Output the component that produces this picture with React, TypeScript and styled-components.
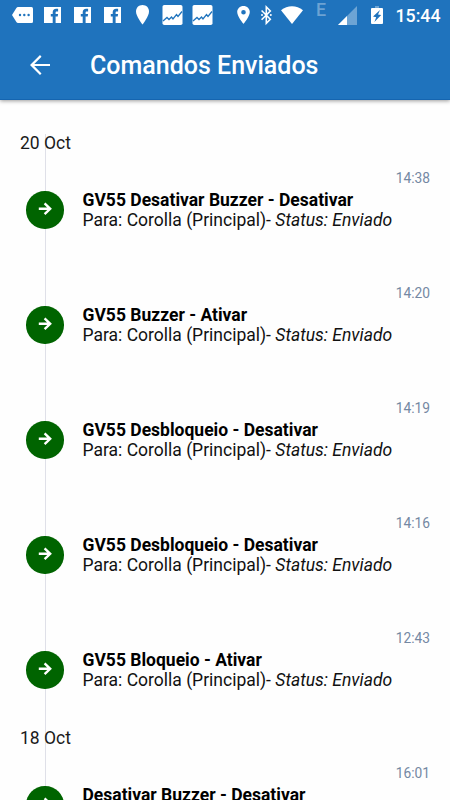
import React from "react";
import styled, { createGlobalStyle } from "styled-components";

const GlobalStyle = createGlobalStyle`
  * { box-sizing: border-box; }
  html, body { margin: 0; height: 100%; overflow: hidden; background: #fefefe; }
  body { font-family: Roboto, "Liberation Sans", sans-serif; color: #000; }
`;

const Screen = styled.div`
  display: flex;
  flex-direction: column;
  width: 450px;
  height: 800px;
  overflow: hidden;
  background: #fefefe;
`;

const Header = styled.header`
  flex: none;
  height: 100px;
  background: #1f73bd;
  border-bottom: 1px solid #1565b0;
  box-shadow: 0 1px 4px rgba(0, 0, 0, 0.4);
  color: #fff;
`;

const StatusBar = styled.div`
  display: flex;
  height: 30px;
`;

const StatusIcons = styled.svg`
  display: block;
  flex: none;
`;

const Clock = styled.span`
  font-size: 17.75px;
  line-height: 32px;
  font-weight: 500;
  margin-left: 5.5px;
  white-space: nowrap;
`;

const Toolbar = styled.div`
  display: flex;
  align-items: center;
  height: 70px;
  padding-left: 25px;
`;

const BackButton = styled.button`
  display: flex;
  padding: 0;
  border: 0;
  background: none;
  color: inherit;
`;

const Title = styled.h1`
  margin: 0 0 0 35px;
  padding-top: 2px;
  font-size: 25px;
  line-height: 30px;
  font-weight: 500;
`;

const Timeline = styled.main`
  flex: none;
  margin-top: 32px;
  background: linear-gradient(#dfe0e8, #dfe0e8) 45px 2px / 1px 100% no-repeat;
`;

const DateLabel = styled.h2`
  margin: 0;
  padding-left: 20px;
  height: 20px;
  font-size: 17.5px;
  line-height: 23px;
  font-weight: 400;
  color: #1a1a1a;
`;

const Entry = styled.article`
  height: 115px;
  padding: 15px 20px 0 26.25px;
`;

const Time = styled.time`
  display: block;
  height: 23px;
  font-size: 13.75px;
  line-height: 23px;
  text-align: right;
  color: #7488a3;
`;

const EntryBody = styled.div`
  display: flex;
  gap: 18.75px;
`;

const Marker = styled.span`
  display: flex;
  align-items: center;
  justify-content: center;
  flex: none;
  width: 37.5px;
  height: 37.5px;
  margin-top: 1.25px;
  padding-bottom: 3px;
  border-radius: 50%;
  background: #006400;
  color: #fff;
`;

const Description = styled.div`
  font-size: 17.5px;
  line-height: 20px;
  white-space: nowrap;
`;

const Command = styled.div`
  font-weight: 700;
`;

const Recipient = styled.div`
  color: #111;
`;

const groups = [
  {
    date: "20 Oct",
    entries: [
      { time: "14:38", command: "GV55 Desativar Buzzer - Desativar" },
      { time: "14:20", command: "GV55 Buzzer - Ativar" },
      { time: "14:19", command: "GV55 Desbloqueio - Desativar" },
      { time: "14:16", command: "GV55 Desbloqueio - Desativar" },
      { time: "12:43", command: "GV55 Bloqueio - Ativar" },
    ],
  },
  {
    date: "18 Oct",
    entries: [{ time: "16:01", command: "Desativar Buzzer - Desativar" }],
  },
];

const Facebook = ({ x }: { x: number }) => (
  <g transform={`translate(${x} 7)`}>
    <path fill="#fff" d="M0 0H17V16H0Z" />
    <path fill="#1f73bd" d="M8.7 16V9.6H6.8V7H8.7V5.2C8.7 3 10 1.8 12.1 1.8H14.1V4.4H12.8C11.8 4.4 11.6 4.9 11.6 5.7V7H14.1L13.7 9.6H11.6V16Z" />
  </g>
);

const Picture = ({ x }: { x: number }) => (
  <g transform={`translate(${x} 5)`}>
    <rect width="20" height="20" rx="1.8" fill="#fff" />
    <path d="M0.5 16L4.5 12.5L6.5 14.5L9 12L10.5 14L14 9.5L15.5 11.5L19.5 6.5" fill="none" stroke="#1f73bd" strokeWidth="1.3" />
  </g>
);

const StatusGlyphs = () => (
  <StatusIcons width="390" height="30" viewBox="0 0 390 30" fill="#fff">
    <path d="M18 7H31.5Q33 7 33 8.5V21.5Q33 23 31.5 23H18Q17 23 16.4 22.1L12 15L16.4 7.9Q17 7 18 7Z" />
    <g fill="#1f73bd">
      <circle cx="20" cy="15" r="1.2" />
      <circle cx="24.3" cy="15" r="1.2" />
      <circle cx="28.6" cy="15" r="1.2" />
    </g>
    <Facebook x={44} />
    <Facebook x={74} />
    <Facebook x={104} />
    <path d="M142.5 5C138.7 5 136 7.8 136 11.4C136 16.2 142.5 24.5 142.5 24.5S149 16.2 149 11.4C149 7.8 146.3 5 142.5 5Z" />
    <Picture x={162.5} />
    <Picture x={192.5} />
    <path fillRule="evenodd" d="M243.5 6C239.9 6 237.2 8.7 237.2 12.1C237.2 16.7 243.5 24 243.5 24S249.8 16.7 249.8 12.1C249.8 8.7 247.1 6 243.5 6ZM243.5 9.9A2.3 2.3 0 1 1 243.5 14.5A2.3 2.3 0 1 1 243.5 9.9Z" />
    <path d="M261.6 10.5L270.3 19.2L266.3 23.2V7L270.3 11L261.6 19.7" fill="none" stroke="#fff" strokeWidth="1.6" />
    <circle cx="262" cy="15.1" r="1" />
    <circle cx="270.8" cy="15.1" r="1" />
    <path d="M292 24L281 10.2Q286 6.2 292 6.2T303 10.2Z" />
    <text x="316" y="16.4" fontSize="17.75" fontWeight="500" fillOpacity="0.35">E</text>
    <path d="M357 6V25H338Z" fillOpacity="0.35" />
    <path d="M345 18V25H338Z" />
    <path d="M345 18L347 16V25H345Z" />
    <path d="M375 6H379V8H375Z" fillOpacity="0.35" />
    <path d="M372 8H382Q383 8 383 9V23Q383 24 382 24H372Q371 24 371 23V9Q371 8 372 8Z" />
    <path fill="#1f73bd" d="M380 10L373 16.6L376.2 17.2L374.4 22L381.2 15L378 14.4Z" />
  </StatusIcons>
);

const App = () => (
  <Screen>
    <GlobalStyle />
    <Header>
      <StatusBar>
        <StatusGlyphs />
        <Clock>15:44</Clock>
      </StatusBar>
      <Toolbar>
        <BackButton aria-label="Voltar">
          <svg width="30" height="30" viewBox="0 0 24 24" fill="currentColor">
            <path d="M20 11.2H7.4l5.8-5.8L12 4l-8 8 8 8 1.2-1.2L7.4 12.8H20v-1.6z" />
          </svg>
        </BackButton>
        <Title>Comandos Enviados</Title>
      </Toolbar>
    </Header>
    <Timeline>
      {groups.map((group) => (
        <section key={group.date}>
          <DateLabel>{group.date}</DateLabel>
          {group.entries.map((entry) => (
            <Entry key={entry.time}>
              <Time>{entry.time}</Time>
              <EntryBody>
                <Marker>
                  <svg width="14" height="14" viewBox="0 0 14 14" fill="none" stroke="currentColor" strokeWidth="2.4">
                    <path d="M0.8 6.8H12M6.6 1.4L12.2 6.8L6.6 12.2" />
                  </svg>
                </Marker>
                <Description>
                  <Command>{entry.command}</Command>
                  <Recipient>
                    Para: Corolla (Principal)- <em>Status: Enviado</em>
                  </Recipient>
                </Description>
              </EntryBody>
            </Entry>
          ))}
        </section>
      ))}
    </Timeline>
  </Screen>
);

export default App;
